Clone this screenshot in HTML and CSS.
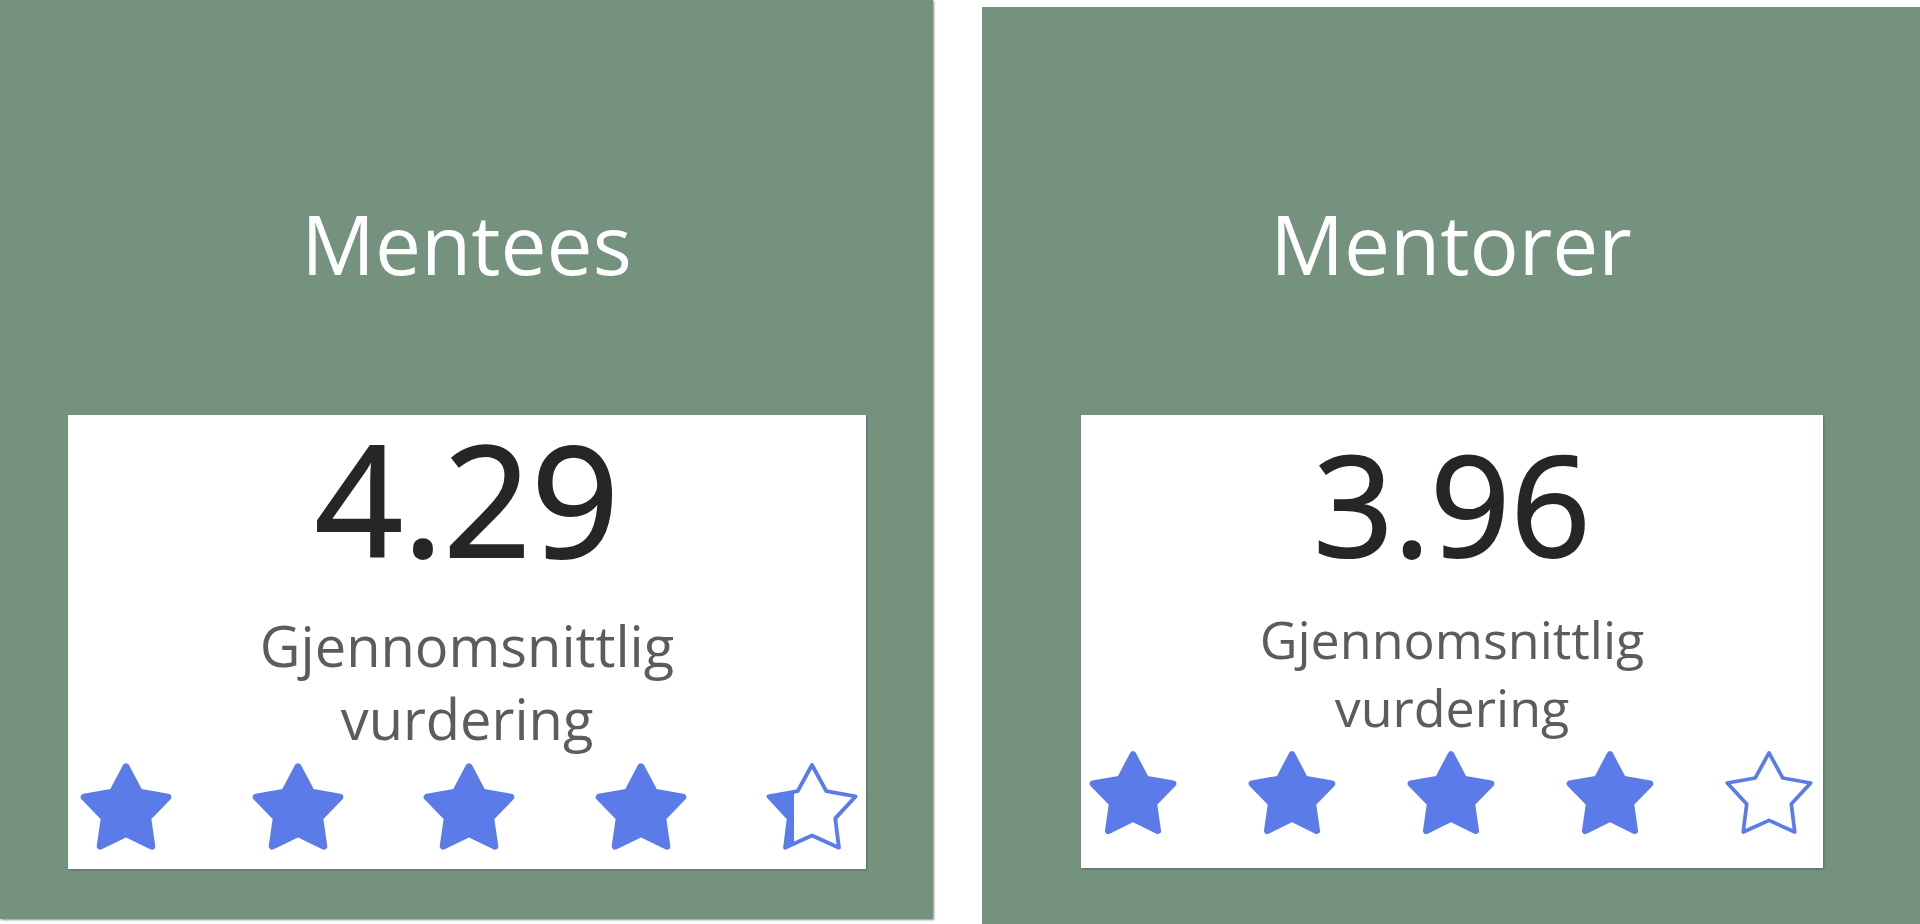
FILE: index.html
```html
<!DOCTYPE html>
<html lang="no">

<head>
  <meta charset="UTF-8">
  <meta name="viewport" content="width=device-width, initial-scale=1.0">
  <title>Vurderinger</title>
  <link rel="stylesheet" href="styles.css">
</head>

<body>
  <!-- stjerner brukt i alle rader -->
  <svg class="sprite" xmlns="http://www.w3.org/2000/svg">
    <defs>
      <symbol id="star" viewBox="1 1 22 22">
        <path d="M12 2.1L15.15 8.07 21.8 9.22 17.09 14.05 18.05 20.73 12 17.75 5.95 20.73 6.91 14.05 2.2 9.22 8.85 8.07z" />
      </symbol>
      <symbol id="star-o" viewBox="1 1 22 22">
        <path d="M12 1.7L15.35 7.83 22.2 9.06 17.45 14.2 18.3 21.05 12 18.2 5.7 21.05 6.55 14.2 1.8 9.06 8.65 7.83z" />
      </symbol>
      <linearGradient id="fill29">
        <stop offset="29%" stop-color="#5b7be9" />
        <stop offset="29%" stop-color="#fff" />
      </linearGradient>
    </defs>
  </svg>

  <section class="panel panel--mentees">
    <h2 class="panel__title">Mentees</h2>
    <div class="card card--mentees">
      <p class="card__value">4.29</p>
      <p class="card__label">Gjennomsnittlig vurdering</p>
      <div class="stars">
        <svg class="star"><use href="#star" /></svg>
        <svg class="star"><use href="#star" /></svg>
        <svg class="star"><use href="#star" /></svg>
        <svg class="star"><use href="#star" /></svg>
        <svg class="star star--part"><use href="#star-o" /></svg>
      </div>
    </div>
  </section>

  <section class="panel panel--mentors">
    <h2 class="panel__title">Mentorer</h2>
    <div class="card card--mentors">
      <p class="card__value">3.96</p>
      <p class="card__label">Gjennomsnittlig vurdering</p>
      <div class="stars">
        <svg class="star"><use href="#star" /></svg>
        <svg class="star"><use href="#star" /></svg>
        <svg class="star"><use href="#star" /></svg>
        <svg class="star"><use href="#star" /></svg>
        <svg class="star star--empty"><use href="#star-o" /></svg>
      </div>
    </div>
  </section>
</body>

</html>
```

FILE: styles.css
```css
* {
  margin: 0;
  padding: 0;
  box-sizing: border-box;
}

body {
  display: flex;
  gap: 49px;
  height: 924px;
  background: #fff;
  font-family: "Open Sans", "Noto Sans", sans-serif;
  overflow: hidden;
}

.sprite {
  position: absolute;
  width: 0;
  height: 0;
}

/* ============= paneler ============= */
.panel {
  display: flex;
  flex-direction: column;
  align-items: center;
  background: #74927d;
}

.panel--mentees {
  width: 933px;
  height: 919px;
  padding-top: 193px;
  box-shadow: 1px 1px 2px rgba(0, 0, 0, 0.45);
}

.panel--mentors {
  flex: 1;
  margin-top: 7px;
  padding-top: 186px;
}

.panel__title {
  color: #fff;
  font-size: 82px;
  font-weight: 400;
  line-height: 100px;
  height: 222px;
}

/* ============= kort ============= */
.card {
  display: flex;
  flex-direction: column;
  align-items: center;
  background: #fff;
  box-shadow: 1px 1px 2px rgba(0, 0, 0, 0.25);
  width: var(--w);
  height: var(--h);
}

.card--mentees {
  --w: 798px;
  --h: 454px;
  --value-size: 154px;
  --value-lh: 164px;
  --label-size: 56px;
  --label-lh: 73px;
  --label-gap: 30px;
  --label-w: 440px;
  --star: 94px;
  --stars-gap: 7px;
  --stars-pad: 0 7px 0 11px;
  margin-left: 1px;
}

.card--mentors {
  --w: 742px;
  --h: 453px;
  --value-size: 140px;
  --value-lh: 175px;
  --label-size: 52px;
  --label-lh: 68px;
  --label-gap: 15px;
  --label-w: 410px;
  --star: 90px;
  --stars-gap: 9px;
  --stars-pad: 0 9px 0 7px;
  margin-left: 2px;
}

.card__value {
  color: #262626;
  font-size: var(--value-size);
  font-weight: 400;
  line-height: var(--value-lh);
  -webkit-text-stroke: 2px #262626;
}

.card__label {
  width: var(--label-w);
  margin-top: var(--label-gap);
  color: #5c5c5c;
  font-size: var(--label-size);
  line-height: var(--label-lh);
  text-align: center;
}

/* ============= stjerner ============= */
.stars {
  display: flex;
  justify-content: space-between;
  width: 100%;
  margin-top: var(--stars-gap);
  padding: var(--stars-pad);
}

.star {
  width: var(--star);
  height: var(--star);
  fill: #5b7be9;
  stroke: #5b7be9;
  stroke-width: 1.6;
  stroke-linejoin: round;
}

.star--empty,
.star--part {
  stroke-width: 0.9;
}

.star--empty {
  fill: #fff;
}

.star--part {
  fill: url(#fill29);
}
```
